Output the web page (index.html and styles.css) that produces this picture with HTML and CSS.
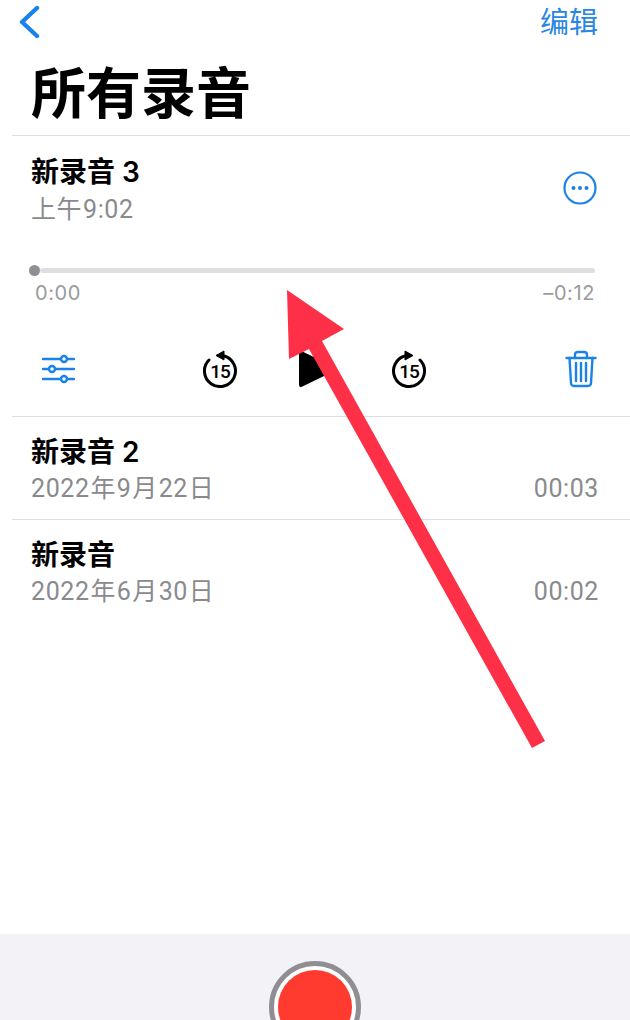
FILE: index.html
```html
<!DOCTYPE html>
<html lang="zh-CN">
<head>
    <meta charset="UTF-8">
    <meta name="viewport" content="width=device-width, initial-scale=1.0">
    <title>所有录音</title>
    <link rel="stylesheet" href="styles.css">
</head>
<body>
    <div class="page">
        <div class="navbar">
            <svg class="back-icon" width="24" height="36" viewBox="0 0 24 36">
                <path d="M19 5 L4 19 L19 33" fill="none" stroke="#1a82e8" stroke-width="4.4" stroke-linecap="round" stroke-linejoin="round"/>
            </svg>
            <a class="edit-link">编辑</a>
        </div>
        <h1 class="page-title">所有录音</h1>

        <div class="recording open">
            <div class="recording-head">
                <div>
                    <div class="recording-name">新录音 3</div>
                    <div class="recording-sub">上午 9:02</div>
                </div>
                <svg class="more-icon" width="34" height="34" viewBox="0 0 34 34">
                    <circle cx="17" cy="17" r="15.5" fill="none" stroke="#1a82e8" stroke-width="2.2"/>
                    <circle cx="10.5" cy="17" r="2" fill="#1a82e8"/>
                    <circle cx="17" cy="17" r="2" fill="#1a82e8"/>
                    <circle cx="23.5" cy="17" r="2" fill="#1a82e8"/>
                </svg>
            </div>
            <div class="progress">
                <div class="progress-knob"></div>
                <div class="progress-track"></div>
            </div>
            <div class="progress-times">
                <span>0:00</span>
                <span>–0:12</span>
            </div>
            <div class="controls">
                <svg width="34" height="30" viewBox="0 0 34 30">
                    <g fill="none" stroke="#1a82e8" stroke-width="2.4" stroke-linecap="round">
                        <path d="M2 5H20M26 5H33"/>
                        <path d="M2 15H8M14 15H33"/>
                        <path d="M2 25H20M26 25H33"/>
                        <circle cx="23" cy="5" r="3"/>
                        <circle cx="11" cy="15" r="3"/>
                        <circle cx="23" cy="25" r="3"/>
                    </g>
                </svg>
                <div class="transport">
                    <svg width="34" height="38" viewBox="0 0 34 38">
                        <path d="M21 6 A15.5 15.5 0 1 1 6 10" fill="none" stroke="#000" stroke-width="3" stroke-linecap="round"/>
                        <path d="M21 1 L21 10 L13 5.5 Z" fill="#000" stroke="#000" stroke-linejoin="round"/>
                        <text x="17" y="28" text-anchor="middle" class="skip-text">15</text>
                    </svg>
                    <svg class="play-icon" width="42" height="42" viewBox="0 0 42 42">
                        <path d="M4 5 L37 21 L4 37 Z" fill="#000" stroke="#000" stroke-width="4" stroke-linejoin="round"/>
                    </svg>
                    <svg width="34" height="38" viewBox="0 0 34 38">
                        <path d="M13 6 A15.5 15.5 0 1 0 28 10" fill="none" stroke="#000" stroke-width="3" stroke-linecap="round"/>
                        <path d="M13 1 L13 10 L21 5.5 Z" fill="#000" stroke="#000" stroke-linejoin="round"/>
                        <text x="17" y="28" text-anchor="middle" class="skip-text">15</text>
                    </svg>
                </div>
                <svg width="32" height="38" viewBox="0 0 32 38">
                    <g fill="none" stroke="#1a82e8" stroke-width="2.4" stroke-linecap="round" stroke-linejoin="round">
                        <path d="M1.5 8H30.5"/>
                        <path d="M10 8V5Q10 2 13 2H19Q22 2 22 5V8"/>
                        <path d="M4.5 8L6 33Q6.2 36 9 36H23Q25.8 36 26 33L27.5 8"/>
                        <path d="M11 13V31M16 13V31M21 13V31"/>
                    </g>
                </svg>
            </div>
        </div>

        <div class="recording">
            <div class="recording-name">新录音 2</div>
            <div class="recording-row">
                <span class="recording-sub">2022 年 9 月 22 日</span>
                <span class="recording-sub">00:03</span>
            </div>
        </div>
        <div class="recording">
            <div class="recording-name">新录音</div>
            <div class="recording-row">
                <span class="recording-sub">2022 年 6 月 30 日</span>
                <span class="recording-sub">00:02</span>
            </div>
        </div>

        <div class="bottom-bar">
            <div class="record-ring">
                <div class="record-dot"></div>
            </div>
        </div>

        <!-- annotation arrow on top of the screenshot -->
        <svg class="arrow" width="630" height="1020" viewBox="0 0 630 1020">
            <path d="M287 290 L344 329 L322 341 L545 741 L532 748 L309 349 L289 359 Z" fill="#fd3047"/>
        </svg>
    </div>
</body>
</html>
```

FILE: styles.css
```css
html, body {
    margin: 0;
    padding: 0;
}
body {
    background-color: white;
    font-family: "Inter", "Noto Sans CJK SC", sans-serif;
}
.page {
    position: relative;
    width: 630px;
    height: 1020px;
    overflow: hidden;
    display: flex;
    flex-direction: column;
}
.navbar {
    display: flex;
    justify-content: space-between;
    align-items: flex-start;
    height: 52px;
    padding: 3px 32px 0 18px;
}
.edit-link {
    color: #2a87e0;
    font-size: 29px;
    line-height: 34px;
    font-family: "Noto Sans CJK SC", sans-serif;
}
.page-title {
    margin: 0 0 0 31px;
    height: 80px;
    font-family: "Noto Sans CJK SC", sans-serif;
    font-size: 55px;
    line-height: 68px;
    font-weight: 700;
    color: #000;
}
.recording {
    margin-left: 12px;
    padding: 16px 31px 0 19px;
    height: 86px;
    border-top: 1px solid #dedee0;
}
.recording.open {
    padding-top: 17px;
    height: 263px;
}
.recording-head {
    display: flex;
    justify-content: space-between;
    align-items: center;
    padding-right: 2px;
}
.more-icon {
    margin-bottom: 5px;
}
.recording-name {
    font-family: "Inter", "Noto Sans CJK SC", sans-serif;
    font-size: 28px;
    line-height: 38px;
    font-weight: 600;
    color: #000;
}
.recording-sub {
    font-family: "Roboto", "Noto Sans CJK SC", sans-serif;
    font-size: 25px;
    line-height: 36px;
    letter-spacing: 0.6px;
    word-spacing: -6px;
    color: #8a8a8e;
}
.recording-head .recording-sub {
    margin-top: 1px;
}
.recording-row {
    display: flex;
    justify-content: space-between;
}
.progress {
    display: flex;
    align-items: center;
    margin-top: 37px;
    margin-right: 4px;
    margin-left: -2px;
}
.progress-knob {
    width: 11px;
    height: 11px;
    border-radius: 50%;
    background-color: #8e8e93;
}
.progress-track {
    flex-grow: 1;
    height: 5px;
    background-color: #dfdfe1;
    border-radius: 3px;
}
.progress-times {
    display: flex;
    justify-content: space-between;
    margin: 3px 4px 0 4px;
    font-size: 20px;
    line-height: 28px;
    letter-spacing: 0.6px;
    color: #9a9a9e;
}
.controls {
    display: flex;
    justify-content: space-between;
    align-items: center;
    margin-top: 41px;
    padding: 0 2px 0 10px;
}
.transport {
    display: flex;
    align-items: center;
    gap: 53px;
    margin-right: 12px;
}
.play-icon {
    margin-left: 7px;
}
.skip-text {
    font-family: "Roboto", sans-serif;
    font-size: 19px;
    font-weight: 500;
    letter-spacing: -1px;
}
.bottom-bar {
    margin-top: auto;
    height: 86px;
    box-sizing: border-box;
    padding-top: 27px;
    background-color: #f2f2f7;
    display: flex;
    justify-content: center;
    overflow: hidden;
}
.record-ring {
    flex-shrink: 0;
    box-sizing: border-box;
    width: 92px;
    height: 92px;
    border: 5px solid #8e8e93;
    border-radius: 50%;
    background-color: white;
    padding: 4px;
}
.record-dot {
    width: 100%;
    height: 100%;
    border-radius: 50%;
    background-color: #ff3b30;
}
.arrow {
    position: absolute;
    top: 0;
    left: 0;
}
```
